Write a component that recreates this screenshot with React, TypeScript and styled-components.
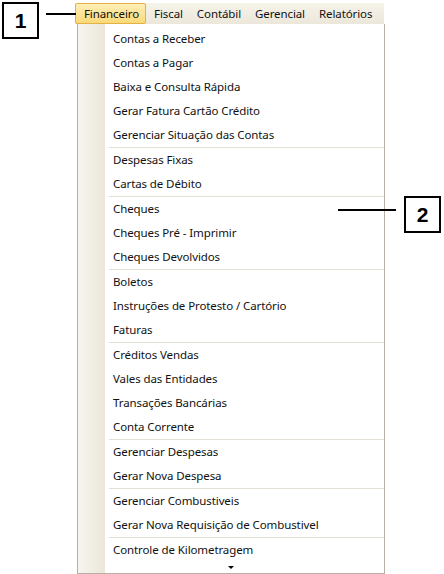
import React from "react";
import styled, { createGlobalStyle } from "styled-components";

const GlobalStyle = createGlobalStyle`
  html, body {
    margin: 0;
    padding: 0;
    background: #ffffff;
  }
  body {
    font-family: "Noto Sans", "DejaVu Sans", sans-serif;
  }
`;

const Page = styled.div`
  position: relative;
  width: 444px;
  height: 574px;
  box-sizing: border-box;
  padding: 3px 0 0 75px;
  overflow: hidden;
`;

const MenuBar = styled.div`
  display: flex;
  align-items: stretch;
  width: 309px;
  height: 21px;
  background: linear-gradient(180deg, #f6f3ea 0%, #ece7da 100%);
`;

const MenuTab = styled.div<{ $active?: boolean; $pad: string }>`
  display: flex;
  align-items: center;
  padding: ${({ $pad }) => $pad};
  font-size: 11.5px;
  letter-spacing: -0.1px;
  color: #111111;
  box-sizing: border-box;
  border: 1px solid ${({ $active }) => ($active ? "#e3b247" : "transparent")};
  border-radius: 2px;
  background: ${({ $active }) =>
    $active ? "linear-gradient(180deg, #fdeeb8 0%, #fbd977 100%)" : "transparent"};
`;

const Dropdown = styled.div`
  margin-left: 2px;
  width: 308px;
  height: 550px;
  box-sizing: border-box;
  border: 1px solid #b9afa2;
  border-top: none;
  padding-top: 3px;
  background:
    linear-gradient(90deg, #f7f5f0 0%, #ebe6d8 100%) left top / 27px 100% no-repeat,
    #ffffff;
  display: flex;
  flex-direction: column;
`;

const Group = styled.div<{ $first?: boolean }>`
  display: flex;
  flex-direction: column;
  border-top: ${({ $first }) => ($first ? "none" : "1px solid #e4dfd3")};
  margin-left: ${({ $first }) => ($first ? 0 : 31)}px;
  padding-left: ${({ $first }) => ($first ? 31 : 0)}px;
`;

const Item = styled.div`
  height: 24px;
  line-height: 24px;
  padding-left: 4px;
  font-size: 11.5px;
  letter-spacing: -0.1px;
  color: #111111;
  white-space: nowrap;
`;

const ScrollRow = styled.div`
  flex: 1;
  display: flex;
  align-items: center;
  justify-content: center;
`;

const Arrow = styled.div`
  width: 0;
  height: 0;
  border-left: 3px solid transparent;
  border-right: 3px solid transparent;
  border-top: 3px solid #000000;
`;

const Callout = styled.div<{ $left: number; $top: number }>`
  position: absolute;
  left: ${({ $left }) => $left}px;
  top: ${({ $top }) => $top}px;
  width: 37px;
  height: 37px;
  box-sizing: border-box;
  border: 2px solid #000000;
  background: #ffffff;
  display: flex;
  align-items: center;
  justify-content: center;
  font-family: "Liberation Sans", Arial, sans-serif;
  font-weight: bold;
  font-size: 21px;
  color: #000000;
`;

const Leader = styled.div<{ $left: number; $top: number; $width: number }>`
  position: absolute;
  left: ${({ $left }) => $left}px;
  top: ${({ $top }) => $top}px;
  width: ${({ $width }) => $width}px;
  height: 2px;
  background: #000000;
`;

const tabs = [
  { label: "Financeiro", pad: "0 6px 0 8px", active: true },
  { label: "Fiscal", pad: "0 6px 0 7px" },
  { label: "Contábil", pad: "0 6px" },
  { label: "Gerencial", pad: "0 6px" },
  { label: "Relatórios", pad: "0 6px" },
];

const groups: string[][] = [
  [
    "Contas a Receber",
    "Contas a Pagar",
    "Baixa e Consulta Rápida",
    "Gerar Fatura Cartão Crédito",
    "Gerenciar Situação das Contas",
  ],
  ["Despesas Fixas", "Cartas de Débito"],
  ["Cheques", "Cheques Pré - Imprimir", "Cheques Devolvidos"],
  ["Boletos", "Instruções de Protesto / Cartório", "Faturas"],
  ["Créditos Vendas", "Vales das Entidades", "Transações Bancárias", "Conta Corrente"],
  ["Gerenciar Despesas", "Gerar Nova Despesa"],
  ["Gerenciar Combustiveis", "Gerar Nova Requisição de Combustivel"],
  ["Controle de Kilometragem"],
];

export default function App() {
  return (
    <>
      <GlobalStyle />
      <Page>
        <MenuBar>
          {tabs.map((t) => (
            <MenuTab key={t.label} $active={t.active} $pad={t.pad}>
              {t.label}
            </MenuTab>
          ))}
        </MenuBar>
        <Dropdown>
          {groups.map((items, i) => (
            <Group key={i} $first={i === 0}>
              {items.map((label) => (
                <Item key={label}>{label}</Item>
              ))}
            </Group>
          ))}
          <ScrollRow>
            <Arrow />
          </ScrollRow>
        </Dropdown>

        <Callout $left={2} $top={2}>1</Callout>
        <Leader $left={46} $top={13} $width={30} />
        <Leader $left={338} $top={209} $width={58} />
        <Callout $left={404} $top={196}>2</Callout>
      </Page>
    </>
  );
}
